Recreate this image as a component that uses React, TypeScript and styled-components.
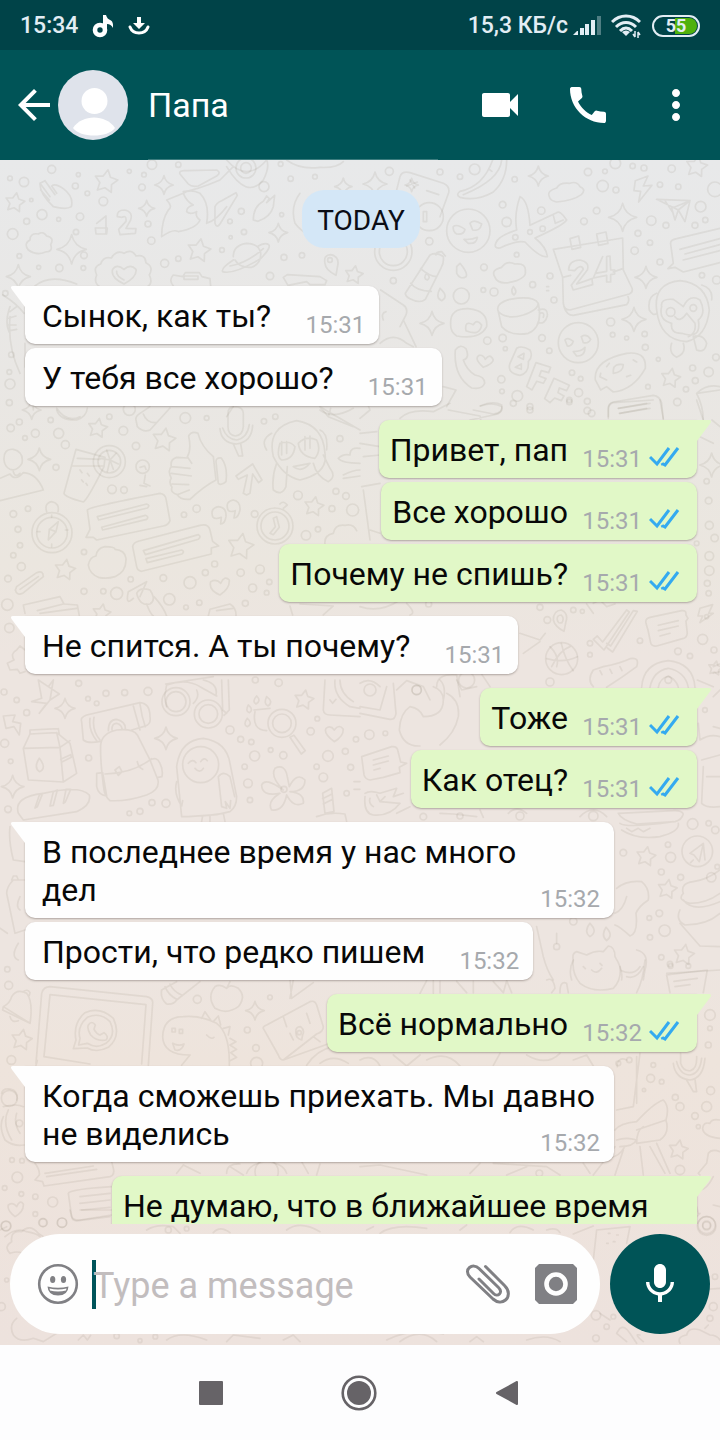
import React from 'react';
import styled, { createGlobalStyle } from 'styled-components';
import { MdArrowBack, MdCall, MdMic, MdMoreVert, MdVideocam } from 'react-icons/md';

const GlobalStyle = createGlobalStyle`
  *, *::before, *::after { box-sizing: border-box; }
  body {
    margin: 0;
    font-family: Roboto, "Noto Sans", sans-serif;
    background: #fdfdfe;
  }
  button {
    padding: 0;
    border: 0;
    background: none;
    color: inherit;
    font: inherit;
    cursor: pointer;
  }
  svg { display: block; }
`;

const Screen = styled.div`
  display: flex;
  flex-direction: column;
  height: 100vh;
  overflow: hidden;
`;

/* ---------- status bar ---------- */

const StatusBar = styled.div`
  flex: none;
  display: flex;
  align-items: center;
  justify-content: space-between;
  height: 50px;
  padding: 2px 20px 0;
  background: #004348;
  color: #e2edf4;
  font-size: 23px;
  font-weight: 500;
  line-height: 28px;
`;

const StatusGroup = styled.div<{ $gap: number }>`
  display: flex;
  align-items: center;
  gap: ${(p) => p.$gap}px;
`;

const Battery = styled.div`
  display: grid;
  place-items: center;
  width: 48px;
  height: 22px;
  margin-left: 6px;
  border: 2px solid #e2edf4;
  border-radius: 11px;
  background: linear-gradient(90deg, transparent 20px, #4fb10c 20px) content-box;
  padding: 1px;
  font-size: 18px;
  font-weight: 700;
  line-height: 16px;
  overflow: hidden;
`;

/* ---------- header ---------- */

const Header = styled.header`
  flex: none;
  display: flex;
  align-items: stretch;
  height: 110px;
  padding: 0 20px 0 10px;
  background: #005457;
  color: #fff;
`;

const IconButton = styled.button`
  flex: none;
  display: grid;
  place-items: center;
  width: 48px;
`;

const Avatar = styled.div`
  flex: none;
  align-self: center;
  width: 70px;
  height: 70px;
  border-radius: 50%;
  background: #dfe3eb;
  overflow: hidden;
`;

const ContactName = styled.h1`
  flex: 0 1 290px;
  margin: 0 auto 0 20px;
  padding-top: 2px;
  border-bottom: 1px solid #3b7c7e;
  font-size: 34px;
  font-weight: 400;
  line-height: 107px;
`;

const HeaderActions = styled.div`
  display: flex;
  gap: 40px;
`;

/* ---------- chat ---------- */

const Chat = styled.main`
  position: relative;
  flex: 1;
  min-height: 0;
  display: flex;
  flex-direction: column;
  background: linear-gradient(180deg, #e8e9ea 0%, #e9e7e4 18%, #ebe6df 34%, #ede5e0 42%, #ede5e0 68%, #eee4dc 76%, #ede2dd 100%);
`;

const Wallpaper = styled.svg`
  position: absolute;
  inset: 0;
  width: 100%;
  height: 100%;
  fill: none;
  stroke: rgba(96, 78, 62, 0.085);
  stroke-width: 5;
  stroke-linecap: round;
  stroke-linejoin: round;
`;

const Messages = styled.div`
  position: relative;
  flex: 1;
  min-height: 0;
  display: flex;
  flex-direction: column;
  padding: 30px 23px 0 25px;
  overflow: hidden;
`;

const DayChip = styled.div`
  flex: none;
  align-self: center;
  margin-bottom: 38px;
  padding: 12px 15px 8px;
  border-radius: 22px;
  background: #d4e7f7;
  color: #0b0d16;
  font-size: 28px;
  line-height: 38px;
`;

const MessageGroup = styled.div<{ $own: boolean }>`
  flex: none;
  display: flex;
  flex-direction: column;
  align-items: ${(p) => (p.$own ? 'flex-end' : 'flex-start')};
  gap: 4px;
  margin-bottom: 14px;
`;

const Bubble = styled.div<{ $own: boolean; $tail: boolean; $wide?: boolean }>`
  position: relative;
  display: grid;
  width: ${(p) => (p.$wide ? '100%' : 'auto')};
  max-width: calc(100% - ${(p) => (p.$own ? 87 : 83)}px);
  padding: ${(p) => (p.$own ? '11px 17px 9px 11px' : '11px 14px 9px 17px')};
  border-radius: 10px;
  border-top-left-radius: ${(p) => (p.$tail && !p.$own ? 0 : 10)}px;
  border-top-right-radius: ${(p) => (p.$tail && p.$own ? 0 : 10)}px;
  background: ${(p) => (p.$own ? '#e1f8c7' : '#fefefe')};
  box-shadow: 0 1px 2px rgba(60, 45, 40, 0.35);
  color: #080808;
  font-size: 32px;
  line-height: 38px;
`;

const TailShape = styled.svg<{ $own: boolean }>`
  position: absolute;
  top: 0;
  ${(p) => (p.$own ? 'right: -15px; fill: #e1f8c7;' : 'left: -15px; fill: #fefefe;')}
`;

const MessageText = styled.span`
  grid-area: 1 / 1;
`;

/* The last word carries room for the time, so both stay on one line. */
const LastWord = styled.span<{ $own: boolean }>`
  padding-right: ${(p) => (p.$own ? 112 : 94)}px;
  white-space: nowrap;
`;

const Meta = styled.span`
  grid-area: 1 / 1;
  place-self: end;
  display: flex;
  align-items: flex-end;
  gap: 7px;
  color: #a6a9ad;
  font-size: 24px;
  line-height: 19px;
`;

/* ---------- composer ---------- */

const Composer = styled.form`
  position: relative;
  flex: none;
  display: flex;
  gap: 10px;
  padding: 10px 10px 11px;
`;

const InputPill = styled.div`
  flex: 1;
  min-width: 0;
  display: flex;
  align-items: center;
  height: 100px;
  padding: 0 22px 0 26px;
  border-radius: 50px;
  background: #fefefe;
  color: #808084;
`;

const Caret = styled.span`
  flex: none;
  width: 4px;
  height: 49px;
  margin-left: 12px;
  background: #00545a;
`;

const TextInput = styled.input`
  flex: 1;
  min-width: 0;
  height: 60px;
  margin-left: -3px;
  padding: 4px 0 0;
  border: 0;
  outline: 0;
  background: transparent;
  color: #080808;
  font: 400 36px/42px Roboto, "Noto Sans", sans-serif;
  &::placeholder { color: #c2bdbe; opacity: 1; }
`;

const PillActions = styled.div`
  display: flex;
  gap: 24px;
`;

const PillButton = styled.button`
  flex: none;
  display: grid;
  place-items: center;
  width: 44px;
  height: 48px;
`;

const MicButton = styled.button`
  flex: none;
  display: grid;
  place-items: center;
  width: 100px;
  height: 100px;
  border-radius: 50%;
  background: #005457;
  color: #fff;
`;

/* ---------- system navigation ---------- */

const NavBar = styled.nav`
  flex: none;
  display: flex;
  align-items: center;
  justify-content: center;
  gap: 100px;
  height: 95px;
  padding-right: 2px;
  background: #fdfdfe;
  color: #666367;
`;

/* ---------- wallpaper drawings ---------- */

type Shape = [number, number, number];

interface Tile {
  x: number;
  y: number;
  paths: string[];
  rings: Shape[];
  stars: Shape[];
  sparkles: Shape[];
}

const tiles: Tile[] = [
  {
    x: 0,
    y: 0,
    paths: [
      'M540 42Q535 30 560 32L650 30Q665 38 650 48L595 78Q575 82 565 72Z',
      'M550 100Q570 85 600 100Q630 130 620 190Q650 180 680 140M680 20Q740 120 790 60Q810 20 800 0M680 0Q740 70 800 0M550 95Q590 90 660 60L700 20',
      'M550 100L500 120Q520 140 505 150Q485 180 485 230Q520 205 535 215Q590 205 600 180Q585 170 590 155Q570 165 560 155Q560 140 580 135Q560 125 550 100',
      'M645 140Q650 128 665 122L708 98L712 106L660 192Q650 206 645 190Z',
      'M120 70Q118 100 160 140Q200 150 214 140Q222 110 190 86Q165 68 155 78L170 100M120 70L150 110M135 62L165 104M120 70L135 62M122 90L148 120',
      'M290 190L318 168L318 220M286 204H322L320 222H288ZM352 170Q350 150 374 150Q400 155 392 180L378 205L408 206L406 220L360 224L356 208L378 184Q380 164 366 172Z',
      'M85 270Q70 250 90 240Q90 218 115 222Q130 212 140 228Q164 232 152 254Q160 275 136 276Q110 288 85 270Z',
      'M300 380Q280 370 290 345Q278 320 302 312Q310 288 334 294Q350 268 372 280Q395 265 408 288Q436 282 438 308Q462 320 448 345Q460 370 442 380',
      'M372 372Q330 352 338 328Q350 310 372 328Q392 310 408 328Q412 350 372 372ZM372 360Q348 348 350 334',
      'M700 290Q700 255 740 250Q775 250 782 278Q785 310 755 322Q720 325 705 300M700 300Q662 325 668 335Q700 345 782 296Q815 262 806 254Q795 246 772 260M690 318Q740 310 790 266',
      'M520 378Q505 360 520 345L548 350L556 338H598L606 350L630 356L632 378M552 348H594V358H552Z',
      'M850 352L862 344L960 350L980 362L975 374H930L920 365L864 376Z',
      'M975 310Q970 285 992 284Q1016 288 1014 312L1008 346Q976 330 975 310',
      'M760 180Q760 140 790 124L800 108L808 116L800 128L824 106L820 140Q812 170 774 184Z',
      'M105 378Q150 340 230 372M8 405Q50 430 72 460M30 440Q12 490 30 520M30 455L50 440M25 475L48 468M25 495L48 495M30 512L50 508',
      'M30 470Q22 560 60 640M75 550V620L95 660L100 750M900 100Q870 140 885 190Q900 210 925 225',
      'M860 0Q900 30 960 22Q1010 25 1030 5',
      'M170 745Q200 790 240 770M680 770L700 740M960 750Q1000 780 1060 745',
    ],
    rings: [[155, 28, 12], [235, 44, 6], [72, 66, 14], [30, 55, 7], [426, 82, 10], [432, 44, 7], [535, 14, 8], [456, 14, 14], [388, 34, 6], [226, 78, 9], [262, 100, 7], [310, 124, 13], [94, 120, 5], [126, 164, 15], [80, 184, 9], [38, 222, 16], [176, 178, 6], [240, 170, 11], [228, 216, 8], [444, 192, 9], [454, 242, 11], [252, 286, 10], [58, 288, 7], [116, 322, 6], [178, 324, 11], [250, 324, 7], [494, 310, 12], [535, 296, 8], [666, 270, 7], [724, 154, 9], [690, 184, 7], [732, 216, 8], [792, 80, 15], [842, 12, 7], [872, 56, 8], [945, 50, 7], [845, 164, 6], [852, 292, 9], [906, 286, 8], [810, 348, 11], [692, 232, 5], [738, 24, 30], [738, 24, 16], [16, 400, 8], [34, 584, 8], [28, 636, 7], [30, 672, 15], [28, 728, 9], [990, 300, 7]],
    stars: [[318, 65, 36], [45, 128, 30], [597, 272, 36], [1062, 345, 28]],
    sparkles: [[492, 75, 28], [440, 145, 24], [215, 268, 44], [835, 218, 28], [55, 350, 36], [1030, 80, 26]],
  },
  {
    x: 360,
    y: 0,
    paths: [
      'M120 50Q126 32 150 38L250 70Q270 78 266 98L240 170M120 50L110 90M200 92L236 104M140 78L172 66M150 60L164 84',
      'M440 0Q440 60 400 96Q350 125 300 112Q286 104 300 94Q370 80 398 0M425 0Q420 60 310 104',
      'M568 110Q560 92 590 84Q600 66 630 70Q650 62 660 80Q680 88 664 104Q640 122 590 126Q570 122 568 110Z',
      'M826 62L864 48L850 78L876 76L836 126L842 94L822 92Z',
      'M890 118L990 122L975 185L955 150ZM990 122L955 150L945 180L935 145ZM915 122L940 160',
      'M480 110Q505 120 510 196L590 158Q600 150 620 180Q610 196 525 234Q560 262 562 290Q540 294 495 246Q470 240 420 264Q400 266 408 248Q415 228 470 210Q462 160 480 110M580 166L586 190L610 180',
      'M580 268L788 234L790 330L816 384Q820 396 808 402L630 450Q612 450 610 430L608 352ZM608 352L632 346M760 336L788 326M612 440Q620 466 640 466L800 434Q810 424 804 410M630 236L656 228L662 262L636 268ZM710 222L738 216L744 250L716 256Z',
      'M626 330Q626 302 660 300Q690 306 682 330L650 372L696 356L698 374L640 390L634 376L670 328Q664 310 644 332ZM728 290L706 340L740 334V290L750 288L752 330H764V342L752 344V366H740V346L700 354Z',
      'M932 252Q930 240 950 236L1080 205M932 252L940 310L924 326L945 322L970 336L1080 308M960 268L1080 236M975 282L1080 254M970 300L1080 272',
      'M136 400L210 285Q230 275 250 290Q252 310 244 322L196 418Q180 432 150 416Q136 410 136 400M152 370Q170 394 214 394M182 326Q210 350 230 350M200 340Q188 356 202 360Q214 352 200 340',
      'M228 285Q228 275 245 275L256 288M290 320L300 310Q325 340 318 350Q300 360 290 340Z',
      'M404 350Q392 330 425 322Q440 300 465 312Q500 308 496 336Q500 350 470 362Q415 380 404 350',
      'M415 455Q405 430 450 418Q520 405 535 430Q550 500 505 520Q450 530 425 500ZM415 455Q440 480 490 465Q535 450 535 430M535 450Q565 440 562 468Q555 494 535 488M540 460Q555 455 550 472',
      'M272 490Q270 445 325 446Q385 452 380 500Q360 540 290 528Q270 516 272 490M318 512Q312 480 340 494Q350 475 365 495Q360 530 318 512',
      'M286 570Q300 550 318 566Q330 595 310 600Q320 630 345 645Q375 650 374 670Q366 690 335 684Q280 650 286 570M370 622Q340 595 358 586Q370 584 376 598Q390 578 400 600Q398 612 370 622',
      'M450 610L470 565Q485 555 510 570Q520 590 505 605Q508 640 480 646Q440 640 450 610M474 590L492 580L490 598ZM466 622L484 612V628Z',
      'M528 608L572 622L566 638L544 632L538 648L558 656L550 670L530 664L516 690L500 680ZM582 655L628 676L620 692L598 684L594 698L612 708L604 722L584 714L570 728L554 716Z',
      'M706 660Q700 600 800 580Q860 572 856 625Q820 690 760 696L740 680L722 690ZM760 630Q762 610 790 614Q790 636 760 640ZM722 640L720 650L740 660M820 600L830 606M740 620L748 610M800 650L812 646',
      'M890 450Q880 370 960 362Q1040 370 1048 450Q1040 530 980 545Q900 540 890 450M905 440Q900 415 940 418Q965 435 970 440Q990 400 1020 420Q1040 460 1015 480Q1025 540 965 520Q930 520 935 490Q895 480 905 440M890 400Q862 410 868 450Q880 470 890 460M1025 375Q1060 385 1055 420',
      'M945 470Q960 490 980 460L1005 490Q1010 520 985 530M935 550Q925 580 950 592Q980 580 970 550M1000 530Q1030 520 1040 550Q1035 580 1010 570Z',
      'M745 745Q745 730 760 726L880 706Q900 708 905 730L910 780M745 745V770M775 745L870 730M778 760L870 745M1080 680Q1040 670 1010 700Q1030 740 1030 780M1010 700L1080 690',
      'M62 390L130 435Q145 445 138 465L120 500M70 480Q62 460 78 455M130 480L168 560M60 550Q100 515 140 550L160 560',
      'M250 680L288 690L260 740M265 750L360 768L362 780M362 738Q400 725 425 740Q430 760 400 765L330 780',
      'M280 200Q290 190 315 208Q312 225 290 222Q278 215 280 200M330 190Q340 176 365 192Q360 215 338 210ZM312 238Q335 240 352 232Q350 252 325 250Z',
      'M615 540Q622 530 640 544Q635 560 622 558ZM664 530Q680 520 692 538Q685 552 670 548ZM640 575Q665 575 675 562Q675 590 650 588Z',
      'M390 30L396 34M560 380H566M560 392H566M460 380Q450 395 462 405Q474 395 460 380M240 385Q225 415 245 422Q268 410 240 385',
      'M190 155H200V185H190ZM175 60',
    ],
    rings: [[208, 170, 42], [325, 212, 65], [100, 275, 56], [100, 275, 42], [655, 548, 60], [88, 34, 12], [240, 36, 9], [344, 28, 16], [300, 50, 8], [464, 58, 8], [684, 36, 11], [735, 34, 7], [728, 78, 17], [768, 90, 9], [766, 10, 16], [818, 18, 8], [852, 24, 9], [935, 26, 11], [900, 74, 8], [955, 80, 8], [1065, 88, 22], [1022, 140, 16], [1036, 180, 8], [1005, 196, 9], [918, 196, 9], [874, 182, 14], [834, 220, 9], [870, 248, 8], [824, 272, 11], [900, 306, 9], [428, 134, 10], [544, 152, 11], [440, 186, 14], [710, 152, 10], [672, 184, 10], [510, 216, 7], [548, 206, 8], [466, 232, 8], [208, 244, 11], [470, 284, 7], [372, 322, 10], [570, 348, 9], [518, 374, 9], [370, 390, 7], [402, 396, 12], [304, 408, 24], [582, 420, 9], [382, 542, 11], [428, 534, 11], [546, 534, 10], [436, 566, 6], [568, 572, 8], [752, 486, 12], [758, 524, 7], [854, 522, 8], [800, 534, 6], [856, 562, 9], [895, 598, 6], [1026, 346, 8], [1070, 360, 12], [424, 658, 11], [426, 694, 7], [472, 708, 16], [510, 750, 9], [636, 638, 8], [662, 656, 7], [656, 698, 12], [628, 726, 8], [682, 724, 9], [682, 752, 10], [998, 624, 9], [1046, 636, 14], [1006, 662, 9], [1068, 592, 10], [864, 680, 7], [978, 688, 8], [952, 726, 11], [100, 362, 9], [932, 456, 13], [1000, 444, 10]],
    stars: [[1010, 20, 33], [932, 655, 30]],
    sparkles: [[45, 72, 36], [535, 48, 30], [788, 172, 42], [858, 352, 33], [822, 478, 36], [216, 490, 36], [155, 75, 20]],
  },
  {
    x: 0,
    y: 240,
    paths: [
      'M170 30Q180 62 230 60Q260 50 262 24M408 60Q405 50 420 40L450 20M408 60L412 80Q430 98 450 90L510 24M430 42Q440 70 470 68',
      'M684 40Q684 20 706 20Q730 22 730 40V80Q728 106 706 108Q684 104 684 80ZM660 86Q664 130 710 132Q756 126 758 76M668 84Q680 118 710 120Q742 114 748 74M700 132L716 168H728L722 130',
      'M575 190L562 170Q575 150 566 108Q575 92 594 100Q604 140 640 170L648 240Q610 260 570 298Q540 300 532 284Q510 278 516 262Q505 246 514 235Q502 212 514 200Q510 178 530 172L562 174M515 200L570 205M514 220L574 228M516 252L566 254M532 284L568 270M648 185Q648 172 664 174Q684 200 678 245Q664 258 655 250Z',
      'M740 285L730 280L742 225L715 238L708 228L758 192L786 240L776 248L758 222L750 280Z',
      'M820 170Q800 80 890 62Q970 75 975 160Q985 220 900 240Q850 230 820 170M800 150Q780 120 815 100M960 90Q985 100 980 150M830 190Q815 230 820 270Q845 290 858 260L862 200M940 190Q950 230 985 245Q1010 230 990 205L970 165M885 140Q870 120 840 130Q828 170 845 180Q880 180 885 140M895 130Q900 170 945 175Q965 150 950 120Q920 105 895 130M880 200Q905 220 930 190Q905 195 880 200M845 125V165M860 125V160M915 110V150M930 108V145',
      'M960 20L1080 90M960 20L985 50L1060 80M985 50L992 25M1015 175Q1030 160 1050 165Q1050 140 1080 145M1015 175Q1025 190 1080 190M1030 225Q1060 210 1080 210M1030 235L1080 228',
      'M12 180Q10 146 40 148Q72 155 66 190Q50 215 30 208Q14 200 12 180M40 215Q45 235 60 220M0 235L30 222Q45 245 70 218Q110 220 130 270L0 302',
      'M228 148L192 280Q195 292 250 306Q262 300 312 200L315 172ZM215 198L312 198M232 175L300 178M320 150L330 180L348 160M330 180L355 192M330 180L322 215M330 180L300 175M330 180L340 208',
      'M240 210L246 218M262 220L268 228M245 240L250 246M258 250L262 256',
      'M436 225L432 250L450 258M420 256L440 260M420 202L434 198L438 208',
      'M262 330Q268 320 480 280Q495 282 498 296L510 362Q505 376 490 378L290 420L280 412L258 412L270 388ZM292 350L440 312Q452 316 442 324L296 360ZM305 382L436 346Q448 350 440 358L308 390Z',
      'M398 440Q400 428 415 424L600 376Q625 370 630 390L638 424L656 438L634 444V462L425 514Q412 512 410 500ZM430 452L595 404Q605 410 595 418L436 464ZM438 476L545 450Q555 454 546 462L442 488Z',
      'M638 350Q630 325 655 320Q680 322 678 350Q675 372 662 372L664 352Q645 360 638 350M684 330Q675 304 700 300Q722 304 720 330Q715 354 702 354L706 332Q690 338 684 330',
      'M145 420L148 388L175 365L168 395ZM148 388L168 395M140 335Q132 310 155 305Q180 310 174 335M155 345V352M155 432V440M112 395H120M196 390H204',
      'M295 532Q268 520 265 495Q270 470 288 468Q290 445 315 440Q345 440 345 448Q375 450 378 475Q380 515 345 530Q320 538 295 532',
      'M50 560L110 518Q130 510 130 530L68 580Q50 588 46 570ZM60 568L115 530',
      'M75 640L70 615L180 590L192 612L232 615L238 648M112 632L190 612M120 640L230 625',
      'M400 595Q375 620 385 575L440 545L420 590M410 580Q420 560 450 570Q470 600 450 612Q420 620 410 580M440 612Q450 640 460 648M462 590Q490 620 500 648',
      'M660 585Q625 570 632 545Q650 535 662 550Q674 525 688 540Q690 565 660 585M625 648L630 628L690 612Q710 625 708 648M650 632L700 625',
      'M820 355L826 380L810 400L820 404L838 382L830 350ZM840 312Q850 300 862 315L850 325',
      'M975 432Q972 405 1000 400Q1005 372 1035 376Q1060 370 1070 392M870 618L878 645M900 612L1000 618L970 645',
      'M42 780Q30 760 50 750L60 738L75 750M42 780L22 790L30 810L52 808L60 820L75 815',
    ],
    rings: [[328, 185, 48], [328, 185, 34], [156, 398, 60], [156, 398, 46], [825, 378, 54], [825, 378, 42], [428, 200, 20], [32, 84, 11], [58, 66, 9], [75, 114, 7], [106, 100, 12], [152, 60, 8], [176, 100, 15], [196, 134, 12], [370, 92, 13], [408, 138, 11], [556, 54, 16], [620, 54, 7], [792, 64, 8], [826, 50, 8], [388, 28, 18], [328, 50, 8], [168, 202, 9], [336, 268, 13], [372, 270, 10], [40, 342, 10], [84, 326, 8], [54, 388, 9], [60, 436, 8], [40, 466, 8], [64, 500, 12], [24, 536, 10], [252, 456, 8], [22, 614, 17], [28, 684, 14], [252, 574, 9], [310, 574, 8], [350, 580, 18], [392, 538, 8], [490, 534, 10], [570, 548, 18], [508, 598, 17], [644, 492, 9], [722, 518, 11], [780, 508, 13], [616, 518, 9], [758, 564, 12], [808, 546, 8], [800, 578, 7], [736, 610, 9], [598, 608, 8], [558, 622, 7], [590, 326, 11], [552, 344, 8], [764, 342, 10], [894, 286, 13], [1008, 274, 9], [1038, 288, 10], [1058, 330, 18], [996, 326, 9], [918, 406, 14], [954, 388, 8], [1020, 116, 9]],
    stars: [[293, 85, 30], [492, 120, 36], [942, 320, 30], [722, 440, 40], [195, 510, 32], [305, 640, 28]],
    sparkles: [[118, 178, 34], [95, 30, 28]],
  },
  {
    x: 360,
    y: 240,
    paths: [
      'M120 55Q150 25 220 35L270 10M360 18Q400 0 425 15Q430 40 400 42L340 30M745 55V30Q745 12 760 8L880 0M775 25L860 10M780 40L860 25M900 0L910 55M1010 0L1030 60',
      'M0 100L50 95M0 130L60 140M10 170L60 165M5 260L60 250M10 270L30 420M30 390L60 400M0 55L30 30L20 5',
      'M1060 130L1020 110M1056 60L1080 80',
      'M580 660Q580 632 604 630Q626 640 618 665L612 694Q585 680 580 660M592 660Q590 645 604 645Q614 655 606 668Q594 672 592 660',
      'M700 718L712 708L728 726L800 630L808 636L732 750ZM740 730L752 738L820 632L832 634L758 756L742 744',
      'M858 670Q855 655 870 652L965 632Q980 630 978 645L984 655L978 664L982 700Q980 714 968 716L890 738Q874 740 872 728L864 690ZM895 676L955 662M895 692L955 678M900 708L930 700',
      'M1020 625L1058 614L1046 640L1060 640L1020 668L1028 648L1014 648Z',
      'M570 740Q600 770 590 800M560 776Q610 790 652 770M604 730Q615 780 640 812M630 740Q600 750 575 800',
      'M700 860Q680 840 700 810L730 800Q780 790 810 776Q840 770 830 800Q790 830 740 862M720 812L726 824M750 808L756 820M780 800L786 812',
      'M845 862Q850 790 925 782Q1000 790 1005 862M870 862Q880 812 925 805Q975 815 985 862M895 862Q900 835 925 828Q950 840 955 862',
      'M480 700L540 720L556 700M490 760L540 725M0 620Q60 640 120 600M140 610Q170 640 150 645',
      'M1060 800L1080 792M1060 820L1080 815M0 850Q30 830 60 860M110 870L140 842L190 860L210 900M230 860Q230 820 290 825L300 890M310 820L350 800L390 860',
      'M700 610L720 600L740 620L765 612M680 612L700 640',
    ],
    rings: [[605, 776, 48], [30, 870, 18], [170, 870, 14], [320, 840, 24], [925, 840, 10], [460, 10, 9], [510, 20, 9], [628, 0, 8], [695, 40, 10], [640, 630, 8], [540, 622, 9], [1048, 376, 12], [1046, 302, 10], [1048, 468, 13], [1048, 512, 14], [1042, 550, 9], [1046, 580, 8], [1040, 244, 8], [954, 754, 10], [990, 768, 8], [840, 722, 8], [690, 730, 8], [690, 764, 7], [1028, 718, 15], [1040, 650, 6], [562, 660, 10], [570, 846, 12], [1064, 414, 11], [206, 612, 9], [1010, 430, 7], [667, 634, 6], [1062, 750, 9]],
    stars: [[1066, 805, 22]],
    sparkles: [[1055, 195, 36]],
  },
  {
    x: 0,
    y: 520,
    paths: [
      'M22 760L0 745',
      'M115 0L145 20L160 0L150 60L118 100L140 70L95 65L125 55ZM145 20L178 42L150 60',
      'M10 108L45 105L38 125L62 130L58 165L42 140L18 145Z',
      'M245 125Q240 112 260 105L420 68Q450 70 450 110Q455 135 430 140L395 150M245 125L250 180Q265 192 300 184M270 115Q265 150 290 182M282 112Q275 150 300 180M400 78L420 150M420 72Q425 110 436 140',
      'M325 152Q325 118 350 118Q378 125 376 148M336 150Q335 130 350 130Q366 135 366 148M302 195Q305 160 350 150Q400 145 412 165Q440 220 450 240L474 300Q480 330 440 345Q380 365 330 362Q315 350 312 330Q300 240 302 195M315 282Q400 280 455 236M345 270L358 260L366 275L355 286ZM412 245Q415 262 428 268M290 280L308 278L320 348Q295 345 290 320ZM450 240Q470 228 480 250Q490 270 486 290L474 292',
      'M70 205L90 162L170 158L210 190L230 280L190 306L85 300ZM90 150L175 146M90 150V162M175 146L178 165M70 205L180 202L190 306M180 202L170 158M180 202L210 182M118 235Q100 262 118 275Q142 265 118 235M182 238L212 224L214 232L186 246Z',
      'M55 400Q40 350 130 340Q240 315 268 345Q275 375 230 395L70 420ZM105 384L118 345L128 340L112 380ZM150 378L160 335L172 330L160 376ZM190 370L198 328L212 328L196 366Z',
      'M500 80Q490 50 498 30M497 30L500 15Q560 -5 600 20L650 48M497 12L640 -10M530 0M665 0L668 90L680 100M685 0L688 90L672 106M610 0Q655 10 648 45M580 70Q600 50 590 30',
      'M545 410L530 260Q540 180 610 175Q680 185 690 250L710 350Q710 380 690 395L650 404L565 410ZM530 305Q520 340 545 378L548 362M655 290Q670 270 690 290L704 350M655 290L665 380L680 385L676 365L690 385L692 362M565 250Q578 235 588 248M602 245Q612 230 622 242M585 265Q600 282 610 265M605 424L608 408L670 400L675 424M630 406V424',
      'M762 90L810 85M765 95Q755 150 800 152M870 172L882 166L916 212L904 222ZM745 75Q735 95 748 98Q762 90 745 75M770 48Q755 65 768 72Q785 62 770 48M800 50Q790 72 804 78Q822 66 800 50M742 115Q728 135 742 140Q760 130 742 115',
      'M850 330Q810 290 825 265Q855 250 862 290L868 320Q890 275 915 300Q915 335 870 335Q915 340 910 370Q880 385 860 345Q850 395 815 390Q800 365 840 340Q785 350 785 315Q795 290 850 330',
      'M970 90L975 0M970 90Q972 105 990 105L1080 110M1005 0Q1000 50 1050 80L1080 85M1020 0Q1020 40 1060 65M990 60L998 70L1008 58M1003 185Q970 160 978 145Q992 135 1003 150Q1018 130 1030 148Q1030 170 1003 185',
      'M968 340L995 325L1002 395L975 400ZM968 356L996 342M970 372L998 358M950 410Q990 395 1035 402L1040 424M1062 305H1080M1062 328H1080',
      'M30 440Q25 480 40 540L75 545M20 640Q20 620 40 600H75M20 640L45 760L75 750M35 600L40 588H50L55 600M60 650Q45 680 60 690M55 790Q30 830 55 840',
    ],
    rings: [[528, 65, 42], [528, 65, 30], [625, 102, 42], [625, 102, 28], [602, 254, 54], [846, 130, 42], [846, 130, 28], [852, 328, 9], [12, 36, 9], [50, 60, 8], [80, 98, 9], [14, 190, 12], [32, 244, 7], [266, 234, 9], [264, 56, 7], [290, 70, 7], [318, 40, 9], [374, 38, 9], [444, 34, 12], [236, 10, 9], [456, 368, 9], [498, 370, 12], [420, 394, 9], [388, 400, 7], [690, 150, 12], [722, 178, 9], [754, 186, 8], [812, 210, 7], [850, 226, 11], [764, 228, 15], [734, 260, 8], [744, 310, 13], [750, 360, 8], [932, 154, 11], [952, 116, 7], [1068, 178, 8], [984, 228, 16], [1036, 214, 9], [950, 260, 8], [970, 292, 13], [1052, 262, 9], [1040, 340, 8], [24, 388, 10], [836, 8, 11], [766, 0, 9], [22, 868, 8]],
    stars: [[912, 60, 30]],
    sparkles: [[195, 85, 30], [498, 175, 34], [38, 320, 34]],
  },
  {
    x: 360,
    y: 520,
    paths: [
      'M0 100L90 118Q105 120 108 100L100 10M0 80L60 90L80 20M220 20Q250 30 250 60Q250 110 190 110Q180 85 150 80Q120 100 118 150Q130 200 180 198M250 60Q260 20 240 0M260 40Q300 60 295 110Q285 160 240 195M290 0L305 30L350 20',
      'M5 230L95 200Q112 198 114 214L122 246L140 250L118 262L120 278L70 292L30 300Q15 298 12 284ZM40 240L85 228M40 255L85 243M42 270L60 265',
      'M15 340Q30 330 60 340L110 325L100 350L130 340M15 350Q10 400 40 405Q90 410 120 370L60 365L50 345M60 365L75 350M150 380L110 400M30 355Q25 370 40 380',
      'M1020 180Q1050 160 1080 170M1025 240L1080 225M1030 260L1025 370Q1040 385 1080 380M1040 290H1080M1015 130L1020 180M1060 140L1080 145',
      'M775 400L940 392Q965 390 970 402Q965 420 945 425L830 432Q785 420 775 400M780 430Q800 445 940 425M785 450Q830 480 900 470Q960 455 955 430M800 445L815 455L835 445L850 455L870 445',
      'M990 520L1030 490L1018 545L1002 525ZM1030 490L1035 540M1000 540L992 548M1000 610',
      'M770 625Q800 600 845 605Q870 625 865 660Q835 680 828 700Q835 760 810 768Q780 740 765 735M800 650Q790 690 765 700',
      'M970 640Q960 610 1000 605Q1040 600 1080 570M970 640Q950 660 990 670Q1040 670 1080 640M960 690Q945 720 975 735Q1040 735 1080 700M960 730L1020 798L1080 800M970 660Q1000 700 1080 665',
      'M690 730Q670 755 690 770Q715 755 690 730M738 742Q722 768 740 782Q762 765 738 742M530 740L550 830Q560 870 580 900M590 760L590 790',
      'M640 840Q635 820 650 815L680 825Q705 810 730 815L745 798Q765 800 765 830Q790 870 785 900M640 840Q625 870 635 900M670 860L676 866M720 850L726 856M695 870Q710 885 725 865M830 810Q870 820 855 870L850 900M850 860Q830 900 800 890',
      'M920 880L1080 870M445 400Q470 375 500 400M660 410Q700 370 740 410M240 400L280 402L350 410M360 390L370 412',
      'M1012 0L1060 20M1060 50L1080 30',
    ],
    rings: [[1012, 514, 46], [170, 30, 14], [28, 164, 14], [76, 160, 7], [190, 410, 10], [480, 408, 12], [300, 408, 9], [998, 432, 16], [1046, 430, 8], [1066, 450, 11], [924, 494, 8], [790, 518, 10], [932, 532, 15], [904, 576, 9], [962, 592, 9], [1054, 592, 14], [898, 700, 10], [868, 714, 7], [914, 752, 17], [870, 772, 8], [932, 858, 7], [904, 832, 8], [640, 724, 11], [590, 800, 9], [1035, 90, 7], [700, 408, 14], [1072, 560, 7]],
    stars: [[858, 530, 30], [922, 628, 30], [972, 825, 32]],
    sparkles: [],
  },
  {
    x: 0,
    y: 800,
    paths: [
      'M10 140Q30 130 35 110Q50 85 80 100Q100 125 90 190ZM10 140L8 150L90 190M70 95Q82 85 90 98L88 106M30 170Q35 190 55 182',
      'M108 310L125 100Q130 80 150 80L440 110Q460 115 458 130L445 316M132 290L150 104L438 134L425 312M132 290L270 312M108 316L112 302',
      'M228 240Q218 190 255 158Q300 138 340 175Q365 230 325 262Q290 280 262 264L220 266ZM240 235Q230 200 262 172Q300 155 330 185Q350 225 318 250Q290 268 262 250L236 255Z',
      'M265 195Q275 180 286 195L282 208Q290 222 300 225L312 218Q328 230 318 240Q290 245 272 225Q260 205 265 195',
      'M485 90Q510 75 530 65M485 90Q480 115 500 132Q520 135 530 120L600 65M495 80Q505 105 530 118M510 72Q520 95 545 105',
      'M645 80Q620 110 645 145Q680 165 715 140Q740 110 715 85Q690 70 680 85Q660 70 645 80M680 85L690 65M870 60L875 115L940 68M870 115L880 60',
      'M545 316Q570 285 570 285Q490 285 488 230Q490 170 550 170Q600 165 650 190Q690 220 688 316M605 175L615 155L632 180M640 185L655 168L662 195M670 205L690 200L685 225M690 235L708 245L690 255L710 268L692 278L710 292L690 302M518 250Q535 260 552 252Q545 275 525 270ZM620 225Q635 240 642 232M516 205H526V216H516ZM538 208H548V220H538Z',
      'M790 205Q788 200 800 195L930 125Q945 120 950 135L970 200Q970 215 950 222L850 300Q840 300 835 285ZM850 170L860 200M870 220L880 240M920 160L930 190M888 220Q885 200 902 200Q915 210 908 225L905 240Q888 235 888 220M850 300L990 250M940 230L960 245',
      'M960 310Q1000 280 1045 310M920 316Q950 270 1000 260',
      'M5 400Q10 380 40 390Q55 400 50 420M10 440Q50 430 70 440M10 470Q-5 500 15 540Q40 560 72 555M50 460Q40 490 60 520M25 450Q5 490 35 540',
      'M105 610Q120 630 118 645L105 660L128 665L132 678L330 650Q345 645 340 625L335 605M140 650L290 628M135 640L280 618M205 700L215 770Q218 785 235 782L330 770M205 700Q210 688 335 680M240 710L330 700M240 730L330 720M245 750L330 742',
      'M45 770Q20 750 25 735Q40 725 50 740Q60 718 70 732Q72 755 45 770M15 830Q50 800 80 815Q110 820 120 830',
      'M530 640L550 615L600 640M680 640Q680 610 720 612M740 640Q750 610 800 605Q850 610 860 640M905 605L925 640M960 612L950 645M690 620L730 645',
    ],
    rings: [[26, 76, 12], [592, 118, 12], [810, 112, 7], [742, 210, 9], [768, 264, 10], [34, 300, 13], [28, 415, 24], [52, 652, 16], [14, 684, 7], [64, 702, 7], [106, 710, 8], [158, 726, 15], [106, 762, 7], [18, 798, 15], [128, 788, 12], [186, 788, 14], [36, 600, 7], [66, 602, 7], [898, 218, 6], [58, 490, 10], [800, 635, 35], [770, 310, 18]],
    stars: [[65, 240, 32]],
    sparkles: [[765, 152, 28]],
  },
  {
    x: 360,
    y: 800,
    paths: [
      'M200 62L180 100M220 62V100M240 64V98M400 65L430 98L440 62L455 98M560 60Q580 50 585 85L575 98M600 98Q600 60 620 70L625 98M290 64L320 98M340 64V98',
      'M640 0Q635 40 660 70Q700 100 760 85Q785 60 780 20M855 0Q850 60 830 98M780 30Q820 50 840 20',
      'M920 45L1042 30L1030 98M920 45L930 98M942 64L1012 55M945 80L990 74',
      'M940 310Q945 355 990 360Q1030 355 1035 295M950 305Q960 345 990 345Q1020 340 1025 295M962 280V310Q970 335 992 332Q1012 325 1010 290M980 360L1000 395H1010L1005 358',
      'M772 320V310Q780 290 800 300M840 280L820 440L770 450M830 290V430',
      'M765 510Q780 490 830 485Q880 430 910 420Q930 440 918 480L830 510M918 480Q930 520 900 540L830 550Q830 510 850 500M765 560L700 645M790 570L765 645M840 560L850 645M870 560L915 640M890 550L930 640M770 540Q800 530 830 540Q820 560 780 560M740 590Q770 600 795 560',
      'M1045 580Q1055 565 1080 575M1045 580L1040 610L1015 640L1020 645M1028 505Q1030 485 1050 490Q1055 475 1080 480M1028 505Q1030 530 1080 535',
      'M400 610L560 620L600 645M330 640L360 610M0 620L60 615L200 645M500 620L440 645M670 610L690 640',
      'M1015 760L1010 740M1020 690Q1040 690 1060 650M1060 735L1080 740',
      'M0 300Q40 280 60 318M100 285L140 318L180 285M200 300Q260 270 300 318M420 280L400 316M500 285Q560 320 600 280M640 300L680 285L700 318',
    ],
    rings: [[1050, 165, 16], [1045, 255, 9], [1052, 392, 12], [880, 315, 7], [872, 355, 12], [852, 390, 5], [905, 365, 7], [946, 412, 9], [1040, 440, 15], [960, 440, 12], [1005, 468, 10], [930, 12, 8], [985, 18, 7], [775, 310, 7], [808, 300, 8], [1040, 798, 28], [1040, 798, 12], [1050, 205, 7], [960, 630, 14], [1015, 500, 6], [538, 640, 10]],
    stars: [[955, 570, 30]],
    sparkles: [],
  },
  {
    x: 0,
    y: 1050,
    paths: [
      'M30 130Q10 110 35 95Q30 60 65 65Q90 40 115 70L130 80M30 130Q60 120 75 135',
      'M50 325Q25 345 40 375Q60 400 100 385L130 395L170 370M210 0L215 20Q220 32 240 30L335 15M240 0H335',
      'M235 390L250 375L262 390L272 376M500 390Q540 360 620 390M680 395L700 375L780 385M440 60Q470 40 520 50L540 70M860 60Q900 30 960 65M640 68Q660 45 690 68',
      'M850 390L880 375L900 395M0 60L20 50',
    ],
    rings: [[18, 48, 14], [130, 38, 12], [186, 38, 14], [4, 290, 12], [20, 210, 6], [350, 378, 8], [466, 380, 7], [505, 60, 9], [560, 56, 7], [420, 392, 6]],
    stars: [],
    sparkles: [],
  },
  {
    x: 360,
    y: 1050,
    paths: [
      'M60 70Q100 40 200 55M300 60L320 45M450 68Q470 35 520 60M640 72L700 48M710 60L700 150M710 60L810 50L800 100M745 70H750M770 75H775M760 95H765M740 100H745',
      'M120 395Q180 350 230 395M80 390Q160 350 250 372M330 395L350 380L370 395M500 390Q560 370 600 395M720 310L750 330M780 355Q795 345 810 370L830 400M780 355L770 370L800 395M840 375Q820 370 850 395',
      'M960 400Q950 380 980 375Q985 350 1020 360L1050 375Q1070 375 1080 390M1010 240L1080 235M1035 355L1045 345',
      'M20 60L40 50M560 60Q590 50 600 68M1010 20L1020 10',
    ],
    rings: [[1040, 45, 26], [1040, 45, 12], [708, 316, 14], [708, 385, 10], [740, 350, 8], [675, 300, 7], [1060, 290, 12], [1050, 325, 9], [680, 250, 7], [760, 320, 7], [1065, 200, 8]],
    stars: [],
    sparkles: [],
  },
];

const starPath = ([cx, cy, r]: Shape) => {
  const points = Array.from({ length: 10 }, (_, i) => {
    const radius = i % 2 === 0 ? r : r * 0.52;
    const angle = (i * Math.PI) / 5 - 1.4;
    return `${(cx + radius * Math.cos(angle)).toFixed(1)} ${(cy + radius * Math.sin(angle)).toFixed(1)}`;
  });
  return `M${points.join('L')}Z`;
};

const sparklePath = ([x, y, r]: Shape) => {
  const k = r * 0.18;
  return `M${x} ${y - r}Q${x + k} ${y - k} ${x + r} ${y}Q${x + k} ${y + k} ${x} ${y + r}Q${x - k} ${y + k} ${x - r} ${y}Q${x - k} ${y - k} ${x} ${y - r}Z`;
};

const Doodles = () => (
  <Wallpaper viewBox="0 0 720 1185" preserveAspectRatio="xMidYMin slice" aria-hidden="true">
    {tiles.map((tile) => (
      <g key={`${tile.x}-${tile.y}`} transform={`translate(${tile.x} ${tile.y}) scale(0.3333)`}>
        <path d={tile.paths.join('')} />
        <path d={tile.stars.map(starPath).join('')} />
        <path d={tile.sparkles.map(sparklePath).join('')} />
        {tile.rings.map(([cx, cy, r], i) => (
          <circle key={i} cx={cx} cy={cy} r={r} />
        ))}
      </g>
    ))}
  </Wallpaper>
);

/* ---------- icons ---------- */

const NoteIcon = () => (
  <svg width="22" height="24" viewBox="0 0 22 24" fill="none" aria-hidden="true">
    <circle cx="8" cy="16" r="5" stroke="#fff" strokeWidth="4.600" />
    <path d="M11 1H14Q15 5 19 6.500Q21.500 8 21 14Q19 10 15 10V17H11Z" fill="#fff" />
  </svg>
);

const DownloadIcon = () => (
  <svg width="22" height="20" viewBox="0 0 22 20" fill="none" aria-hidden="true">
    <path d="M9 1h4v6h4l-6 6-6-6h4z" fill="#fff" />
    <path d="M2 11c3 8 15 8 18 0" stroke="#fff" strokeWidth="3" strokeLinecap="round" />
  </svg>
);

const SignalIcon = () => (
  <svg width="33" height="20" viewBox="0 0 33 20" fill="#e2edf4" aria-hidden="true">
    <path d="M0 19l4-4h1v4zM7 12h4v7H7zM12 8h4v11h-4zM18 4h4v15h-4z" />
    <path d="M24 0h4v19h-4z" opacity="0.35" />
  </svg>
);

const WifiIcon = () => (
  <svg width="30" height="24" viewBox="0 0 30 24" fill="none" stroke="#e2edf4" aria-hidden="true">
    <path d="M1 8c8-8 20-8 28 0M5 13c6-6 14-6 20 0M9 17c4-4 8-4 12 0" strokeWidth="3" />
    <path d="M11 18q4-3 8 0l-4 4z" fill="#e2edf4" stroke="none" />
    <path d="M24 17v6M22 20l2 3M27 24v-6M29 21l-2-3" strokeWidth="1.500" />
  </svg>
);

const PersonIcon = () => (
  <svg width="70" height="70" viewBox="0 0 70 70" fill="#fff" aria-hidden="true">
    <circle cx="36.500" cy="31" r="13" />
    <path d="M15 58C24 44 48 44 57 58C50 68 22 68 15 58Z" />
  </svg>
);

const TicksIcon = () => (
  <svg width="31" height="22" viewBox="0 0 31 22" fill="none" stroke="#34aaf0" strokeWidth="3" aria-label="Read" role="img">
    <path d="M1 10l7 7L20 1M14 17l2 1L29 1M14 18l-1-2" />
  </svg>
);

const SmileIcon = () => (
  <svg width="42" height="42" viewBox="0 0 42 42" aria-hidden="true">
    <circle cx="21" cy="21" r="18.800" fill="none" stroke="currentColor" strokeWidth="2.600" />
    <ellipse cx="15.700" cy="16.500" rx="2.600" ry="3.600" fill="currentColor" />
    <ellipse cx="26.500" cy="16.500" rx="2.600" ry="3.600" fill="currentColor" />
    <path d="M10.500 23.500Q21 26 31.500 23.500Q31 32.500 21 32.500Q11 32.500 10.500 23.500Z" fill="currentColor" />
    <path d="M12.500 25.500Q21 27.500 29.500 25.500L29 27.500Q21 29.500 13 27.500Z" fill="#fefefe" />
  </svg>
);

const ClipIcon = () => (
  <svg width="44" height="40" viewBox="0 0 44 40" fill="none" stroke="currentColor" strokeWidth="3" strokeLinecap="round" aria-hidden="true">
    <path d="M19.500 2.500L38.500 21.500C44 27 43 33 39.500 36C36 39 31 38.500 27 35L4 13C0.500 9.500 1 5.500 3.500 3.500C6 1.500 10 1.500 13 4.500L32.500 23.500C35 26 35 28.500 33.500 30C32 31.500 29.500 31.500 27.500 29.500L13 15" />
  </svg>
);

const CameraIcon = () => (
  <svg width="42" height="40" viewBox="0 0 42 40" aria-hidden="true">
    <path d="M4 0H38L42 4V36L38 40H4L0 36V4Z" fill="currentColor" strokeLinejoin="round" />
    <circle cx="21" cy="20" r="9.500" fill="none" stroke="#fefefe" strokeWidth="4.600" />
  </svg>
);

const Tail = ({ own }: { own: boolean }) => (
  <TailShape $own={own} width="16" height="24" viewBox="0 0 16 24" aria-hidden="true">
    <path d={own ? 'M0 0H13Q16 0 14.500 3L1 21V24H0Z' : 'M16 0H3Q0 0 1.500 3L15 21V24H16Z'} />
  </TailShape>
);

/* ---------- conversation ---------- */

interface Message {
  text: string;
  time?: string;
}

interface Group {
  own: boolean;
  messages: Message[];
}

const groups: Group[] = [
  { own: false, messages: [{ text: 'Сынок, как ты?', time: '15:31' }, { text: 'У тебя все хорошо?', time: '15:31' }] },
  {
    own: true,
    messages: [
      { text: 'Привет, пап', time: '15:31' },
      { text: 'Все хорошо', time: '15:31' },
      { text: 'Почему не спишь?', time: '15:31' },
    ],
  },
  { own: false, messages: [{ text: 'Не спится. А ты почему?', time: '15:31' }] },
  { own: true, messages: [{ text: 'Тоже', time: '15:31' }, { text: 'Как отец?', time: '15:31' }] },
  {
    own: false,
    messages: [
      { text: 'В последнее время у нас много дел', time: '15:32' },
      { text: 'Прости, что редко пишем', time: '15:32' },
    ],
  },
  { own: true, messages: [{ text: 'Всё нормально', time: '15:32' }] },
  { own: false, messages: [{ text: 'Когда сможешь приехать. Мы давно не виделись', time: '15:32' }] },
  { own: true, messages: [{ text: 'Не думаю, что в ближайшее время' }] },
];

const MessageBubble = ({ message, own, tail }: { message: Message; own: boolean; tail: boolean }) => {
  const split = message.text.lastIndexOf(' ') + 1;
  return (
    <Bubble $own={own} $tail={tail} $wide={!message.time}>
      {tail && <Tail own={own} />}
      {message.time ? (
        <>
          <MessageText>
            {message.text.slice(0, split)}
            <LastWord $own={own}>{message.text.slice(split)}</LastWord>
          </MessageText>
          <Meta>
            <time>{message.time}</time>
            {own && <TicksIcon />}
          </Meta>
        </>
      ) : (
        <MessageText>{message.text}</MessageText>
      )}
    </Bubble>
  );
};

export default function App() {
  return (
    <>
      <GlobalStyle />
      <Screen>
        <StatusBar>
          <StatusGroup $gap={14}>
            <span>15:34</span>
            <NoteIcon />
            <DownloadIcon />
          </StatusGroup>
          <StatusGroup $gap={5}>
            <span>15,3 КБ/с</span>
            <SignalIcon />
            <WifiIcon />
            <Battery>55</Battery>
          </StatusGroup>
        </StatusBar>

        <Header>
          <IconButton aria-label="Back"><MdArrowBack size={48} /></IconButton>
          <Avatar><PersonIcon /></Avatar>
          <ContactName>Папа</ContactName>
          <HeaderActions>
            <IconButton aria-label="Video call"><MdVideocam size={48} /></IconButton>
            <IconButton aria-label="Call"><MdCall size={48} /></IconButton>
            <IconButton aria-label="More options"><MdMoreVert size={48} /></IconButton>
          </HeaderActions>
        </Header>

        <Chat>
          <Doodles />
          <Messages>
            <DayChip>TODAY</DayChip>
            {groups.map((group, g) => (
              <MessageGroup key={g} $own={group.own}>
                {group.messages.map((message, m) => (
                  <MessageBubble key={m} message={message} own={group.own} tail={m === 0} />
                ))}
              </MessageGroup>
            ))}
          </Messages>

          <Composer onSubmit={(e: React.FormEvent) => e.preventDefault()}>
            <InputPill>
              <PillButton type="button" aria-label="Emoji"><SmileIcon /></PillButton>
              <Caret />
              <TextInput type="text" placeholder="Type a message" aria-label="Type a message" />
              <PillActions>
                <PillButton type="button" aria-label="Attach"><ClipIcon /></PillButton>
                <PillButton type="button" aria-label="Camera"><CameraIcon /></PillButton>
              </PillActions>
            </InputPill>
            <MicButton type="button" aria-label="Record voice message"><MdMic size={48} /></MicButton>
          </Composer>
        </Chat>

        <NavBar aria-label="System">
          <IconButton aria-label="Recent apps">
            <svg width="24" height="24" viewBox="0 0 24 24" fill="currentColor" aria-hidden="true">
              <rect width="24" height="24" rx="1" />
            </svg>
          </IconButton>
          <IconButton aria-label="Home">
            <svg width="36" height="36" viewBox="0 0 36 36" aria-hidden="true">
              <circle cx="18" cy="18" r="16.300" fill="none" stroke="currentColor" strokeWidth="2.600" />
              <circle cx="18" cy="18" r="12" fill="currentColor" />
            </svg>
          </IconButton>
          <IconButton aria-label="Back to previous screen">
            <svg width="24" height="26" viewBox="0 0 24 26" fill="currentColor" stroke="currentColor" strokeWidth="2" strokeLinejoin="round" aria-hidden="true">
              <path d="M22 2V24L2 13Z" />
            </svg>
          </IconButton>
        </NavBar>
      </Screen>
    </>
  );
}
